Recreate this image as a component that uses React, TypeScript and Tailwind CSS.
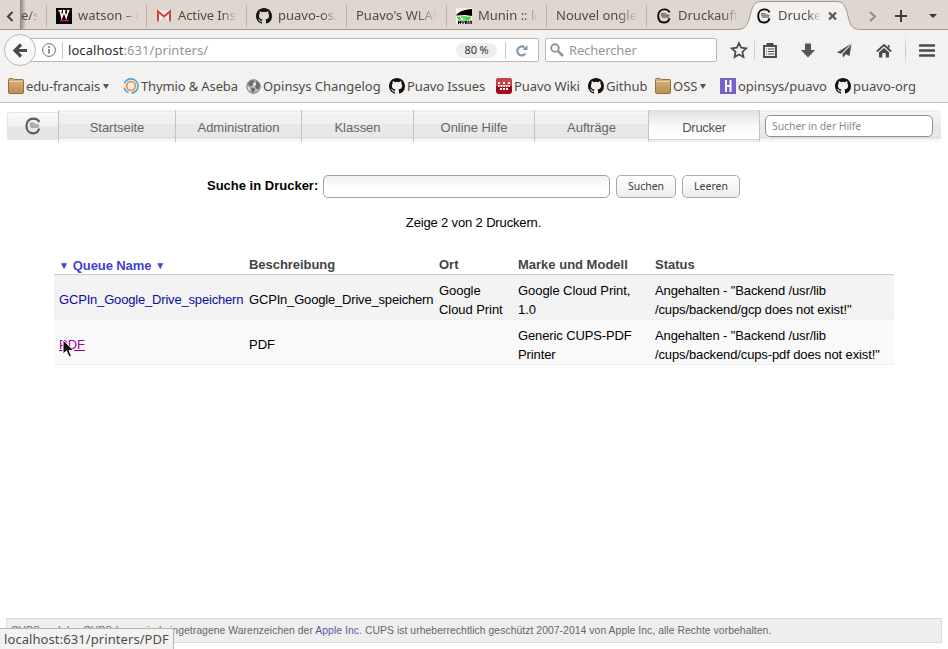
import React from 'react';

const ui = "font-['Noto_Sans',sans-serif]";
const web = "font-['Liberation_Sans',sans-serif]";

const GH = 'M8 0C3.58 0 0 3.58 0 8c0 3.54 2.29 6.53 5.47 7.59.4.07.55-.17.55-.38 0-.19-.01-.82-.01-1.49-2.01.37-2.53-.49-2.69-.94-.09-.23-.48-.94-.82-1.13-.28-.15-.68-.52-.01-.53.63-.01 1.08.58 1.23.82.72 1.21 1.87.87 2.33.66.07-.52.28-.87.51-1.07-1.78-.2-3.64-.89-3.64-3.95 0-.87.31-1.59.82-2.15-.08-.2-.36-1.02.08-2.12 0 0 .67-.21 2.2.82a7.6 7.6 0 0 1 4 0c1.53-1.04 2.2-.82 2.2-.82.44 1.1.16 1.92.08 2.12.51.56.82 1.27.82 2.15 0 3.07-1.87 3.75-3.65 3.95.29.25.54.73.54 1.48 0 1.07-.01 1.93-.01 2.2 0 .21.15.46.55.38A8.01 8.01 0 0 0 16 8c0-4.42-3.58-8-8-8z';

function Github() {
  return <svg className="size-4 shrink-0" viewBox="0 0 16 16"><path fill="#141414" d={GH} /></svg>;
}

function Cups({ color = '#0c0c0c', className = 'size-4' }: { color?: string; className?: string }) {
  return (
    <svg className={`${className} shrink-0`} viewBox="0 0 16 16" fill="none">
      <path d="M13.600 4.400C12.600 2.300 10.800 1.400 8.600 1.400 4.700 1.400 2.200 4 2.200 8s2.300 6.500 5.900 6.500c2.900 0 4.700-1.500 5.400-4.300" stroke={color} strokeWidth="1.900" />
      <path d="M5 5.500h4.500M5 7.300h8.500M6 9.100h7" stroke={color} strokeWidth="1.100" opacity=".55" />
      <path d="M5 6.400h7M5 8.200h8.500" stroke={color} strokeWidth=".8" opacity=".3" />
    </svg>
  );
}

function Folder() {
  return (
    <svg className="size-4 shrink-0" viewBox="0 0 16 16">
      <defs>
        <linearGradient id="folderFill" x1="0" y1="0" x2="0" y2="1"><stop offset="0" stopColor="#d9b27c" /><stop offset="1" stopColor="#b98f55" /></linearGradient>
      </defs>
      <path d="M.5 2V1.500q0-1 1-1h3.500l1 1h8.500q1 0 1 1v11.500q0 1.500-1.500 1.500H2q-1.500 0-1.500-1.500z" fill="url(#folderFill)" stroke="#94703c" />
      <path d="M1.500 3.500h13" stroke="#ecd3a8" />
    </svg>
  );
}

function Watson() {
  return (
    <svg className="size-4 shrink-0" viewBox="0 0 16 16">
      <path fill="#000" d="M0 0h16v16H0z" />
      <path d="M2.500 2.700h3.500M7 2.700h2.500M11 2.700h2.500M4.300 3l1.500 6.500L8 3.500l2.200 6L12.300 3" fill="none" stroke="#fff" strokeWidth="1.600" />
      <path fill="#e5127d" d="M4 11.700h9v1.500H4z" />
    </svg>
  );
}

function Gmail() {
  return (
    <svg className="size-4 shrink-0" viewBox="0 0 16 16">
      <path fill="#f3f1f0" d="M1 2.500h14v11H1z" />
      <path d="m3 13.500 5-5 5 5z" fill="#dbd7d4" />
      <path d="M2 13.500V3.500l6 5 6-5v10" fill="none" stroke="#d0483c" strokeWidth="2" />
    </svg>
  );
}

function Munin() {
  return (
    <svg className="size-4 shrink-0" viewBox="0 0 16 16">
      <path fill="#f4f4f4" d="M0 0h16v16H0z" />
      <path fill="#000" d="M0 7.500C3 3.500 8 1.500 16 1v7L9 7z" />
      <path d="M1 9.500h3M5 9h5M10 9.500h5M2 11h3M7 11h7" stroke="#2ad52f" strokeWidth="1.500" />
      <path d="M2.500 16v-3.200l1 2 1-2V16M6 12.500V15h2v-2.500M9.500 16v-3h1.300v3M12.200 12.500V16M14 16v-3h1.300v3" stroke="#000" fill="none" />
    </svg>
  );
}

function Thymio() {
  return (
    <svg className="size-4 shrink-0" viewBox="0 0 16 16" fill="none">
      <circle cx="8" cy="8" r="7.100" stroke="#42a9df" strokeWidth="1.600" strokeDasharray="29 3 7 4" transform="rotate(-150 8 8)" />
      <circle cx="8" cy="8" r="4.400" stroke="#f2953f" strokeWidth="1.900" />
    </svg>
  );
}

function Globe() {
  return (
    <svg className="size-[15px] shrink-0" viewBox="0 0 16 16">
      <circle cx="8" cy="8" r="7.300" fill="#b9b9b9" stroke="#7a7a7a" />
      <path fill="#6b6b6b" d="M2 5l2.500-3L8 1l1 2-2 1.500.5 2L5 8 3.500 7.500zM10 2l3 1.500L15 7l-1.500 4-2.500-.500L9.500 8 11 6zM5.500 9l4 1-.5 3-2 2-1.500-3z" />
      <path fill="#efefef" d="M1.500 8l2 1.500 1.500 3L2.500 11zM8 4.500l2-1L10.500 6 8 8z" />
    </svg>
  );
}

function Wiki() {
  return (
    <svg className="size-4 shrink-0" viewBox="0 0 16 16">
      <rect width="16" height="16" rx="3" fill="#9d0a20" />
      <path d="M3 0h10q3 0 3 3v5H0V3q0-3 3-3z" fill="#c8424e" />
      <path fill="#fff" d="M2 4h2v2H2zM7 4h2v2H7zM12 4h2v2h-2zM2 7h1.500v2H2zM4.500 7h2v2h-2zM7.300 7h1.500v2H7.300zM9.600 7h2v2h-2zM12.500 7H14v2h-1.500zM4 10h2v2H4zM7 10h2v2H7zM10 10h2v2h-2z" />
    </svg>
  );
}

function HIcon() {
  return (
    <svg className="size-4 shrink-0" viewBox="0 0 16 16">
      <path fill="#7762cc" d="M0 0h16v16H0z" />
      <path d="M6 2v12M10.500 2v12M6 8h4" stroke="#fff" strokeWidth="2" />
    </svg>
  );
}

function Tab({ icon, label, width }: { icon?: React.ReactNode; label: string; width: string }) {
  return (
    <div className="flex h-[29px] w-[100px] shrink-0 items-center pt-[3px]">
      <div className="h-[22px] w-px bg-[#b9b1a9]" />
      <div className="flex items-center gap-1.5 pl-[9px]">
        {icon}
        <span className={`${width} overflow-hidden whitespace-nowrap [mask-image:linear-gradient(to_right,black_75%,transparent)]`}>{label}</span>
      </div>
    </div>
  );
}

function Bookmark({ icon, label, className, menu }: { icon: React.ReactNode; label: string; className: string; menu?: boolean }) {
  return (
    <div className={`${className} flex shrink-0 items-center gap-[2px] whitespace-nowrap`}>
      {icon}
      <span className="pt-px">{label}</span>
      {menu && <svg className="ml-px mt-px h-[5px] w-[6px]" viewBox="0 0 6 5"><path d="M0 0h6L3 5z" fill="#57554f" /></svg>}
    </div>
  );
}

function Browser() {
  return (
    <header className={`${ui} text-[13px] text-[#4c4c4c]`}>
      <div className="relative flex h-[30px] border-b border-[#a1988f] bg-[#dfd6cf]">
        <div className="flex w-[46px] shrink-0 items-center">
          <svg className="ml-[6px] mt-[3px] h-[11px] w-2 shrink-0" viewBox="0 0 8 11"><path d="M6.500 1 2 5.500 6.500 10" fill="none" stroke="#3e3e3e" strokeWidth="2" /></svg>
          <div className="ml-[6px] h-[29px] w-[6px] shrink-0 bg-linear-to-r from-[#8b847d] to-[#dfd6cf]" />
          <span className="-ml-[5px] mt-[3px] w-[17px] overflow-hidden [mask-image:linear-gradient(to_right,black_50%,transparent)]">e/s</span>
        </div>
        <Tab icon={<Watson />} label="watson – r" width="w-[61px]" />
        <Tab icon={<Gmail />} label="Active Inst" width="w-[59px] tracking-[-0.1px]" />
        <Tab icon={<Github />} label="puavo-os/p" width="w-[59px]" />
        <Tab label="Puavo's WLAN" width="w-[81px]" />
        <Tab icon={<Munin />} label="Munin :: lo" width="w-[60px]" />
        <Tab label="Nouvel onglet" width="w-[82px]" />
        <Tab icon={<Cups />} label="Druckaufträge" width="w-[60px]" />
        <svg className="absolute left-[738px] top-0 h-[30px] w-[126px]" viewBox="0 0 126 30">
          <path d="M0 30v-.5C8 29 9 25 11.500 18 14.500 6 15.500 1.500 24 1.500h74c8 0 9.500 4.500 12.500 16.500 2 8 3.500 11 12 11.500V30z" fill="#f4f2f1" />
          <path d="M0 29.500C8 29 9 25 11.500 18 14.500 6 15.500 1.500 24 1.500h74c8 0 9.500 4.500 12.500 16.500 2 8 3.500 11 12 11.500" fill="none" stroke="#a1988f" />
        </svg>
        <div className="relative flex w-[202px] items-center pt-[3px]">
          <div className="ml-[10px]"><Cups /></div>
          <span className="ml-[6px] w-[43px] overflow-hidden whitespace-nowrap [mask-image:linear-gradient(to_right,black_70%,transparent)]">Drucker</span>
          <svg className="ml-[7px] h-[8px] w-[9px] shrink-0" viewBox="0 0 9 8"><path d="m1 .5 7 7M8 .5l-7 7" stroke="#5c5b59" strokeWidth="2.300" /></svg>
          <svg className="ml-[32px] h-[11px] w-2 shrink-0" viewBox="0 0 8 11"><path d="m1 1 5 4.500L1 10" fill="none" stroke="#938c86" strokeWidth="2" /></svg>
          <svg className="ml-[18px] size-3 shrink-0" viewBox="0 0 12 12"><path d="M6 0v12M0 6h12" stroke="#3e3e3e" strokeWidth="2" /></svg>
          <svg className="ml-[22px] h-1 w-2 shrink-0" viewBox="0 0 8 4"><path d="M0 0h8L4 4z" fill="#30343b" /></svg>
        </div>
      </div>

      <div className="flex h-10 items-center bg-[#f4f2f1]">
        <div className="z-10 ml-1 flex size-8 shrink-0 items-center justify-center rounded-full border border-[#bcb8b4] bg-[#faf9f9]">
          <svg className="size-[15px]" viewBox="0 0 15 15"><path d="M8 1.500 2 7.500l6 6M2.500 7.500H14" fill="none" stroke="#4b4b4b" strokeWidth="3.200" /></svg>
        </div>
        <div className="-ml-3 flex h-6 w-[515px] shrink-0 items-center rounded-[2px] border border-[#bcb8b4] bg-white pl-[17px]">
          <svg className="size-[14px] shrink-0" viewBox="0 0 14 14"><circle cx="7" cy="7" r="6.400" fill="none" stroke="#6a6a6a" /><path d="M7 6v4.500M7 3.300v1.600" stroke="#6a6a6a" strokeWidth="1.500" /></svg>
          <div className="ml-[6px] h-[17px] w-px bg-[#c8c8c8]" />
          <span className="ml-[5px] w-[388px] pt-[2px] tracking-[0.06px] text-[#2e2e2e]">localhost<span className="text-[#969696]">:631/printers/</span></span>
          <span className="flex h-[15px] w-[41px] items-center justify-center whitespace-nowrap rounded-full bg-[#eeeeee] text-[11px] tracking-[-0.2px] text-[#333]">80 %</span>
          <div className="ml-[8px] h-[17px] w-px bg-[#c8c8c8]" />
          <svg className="ml-[10px] h-[13px] w-[12px]" viewBox="0 0 12 13"><path d="M9.500 9.500A4.500 4.500 0 1 1 8.500 3.300" fill="none" stroke="#8795a4" strokeWidth="2.100" /><path d="M11.500 1v5h-5z" fill="#8795a4" /></svg>
        </div>
        <div className="ml-[6px] flex h-6 w-[172px] shrink-0 items-center rounded-[2px] border border-[#bcb8b4] bg-white pl-1">
          <svg className="size-[14px]" viewBox="0 0 14 14"><circle cx="5" cy="5" r="3.800" fill="none" stroke="#929292" strokeWidth="1.900" /><path d="m8 8 5 5" stroke="#929292" strokeWidth="2.500" /></svg>
          <span className="ml-[5px] pt-[2px] tracking-[-0.15px] text-[#969696]">Rechercher</span>
        </div>
        <svg className="ml-[13px] size-[18px] shrink-0" viewBox="0 0 18 18"><path d="m9 2 2.100 4.700 5.200.6-3.900 3.500 1.100 5.200L9 13.400 4.500 16l1.100-5.200-3.900-3.500 5.200-.6z" fill="none" stroke="#4b4b4b" strokeWidth="1.700" /></svg>
        <div className="ml-[6px] h-[18px] w-px bg-[#d0ccca]" />
        <svg className="ml-[8px] h-[15px] w-[14px] shrink-0" viewBox="0 0 14 15"><path d="M1 3h12v11H1zM4.500 3V1h5v2" fill="none" stroke="#4b4b4b" strokeWidth="1.900" /><path d="M3 6h1M5 6h6.500M3 8.500h1M5 8.500h6.500M3 11h1M5 11h6.500" stroke="#4b4b4b" strokeWidth="1.200" /></svg>
        <svg className="ml-6 h-[15px] w-[14px] shrink-0" viewBox="0 0 14 15"><path d="M4 .5h6V7h4l-7 7.500L0 7h4z" fill="#555" /></svg>
        <svg className="ml-[22px] size-[15px] shrink-0" viewBox="0 0 15 15"><path d="M14.500.5 0 9.500l4 1.300zM14 2 5.500 11l.5 3.500 2-2.200zM14.500 1 8.500 11l4 2z" fill="#4b4b4b" /></svg>
        <svg className="ml-6 h-[15px] w-4 shrink-0" viewBox="0 0 16 15"><path d="M.8 8.500 8 2l7.200 6.500" fill="none" stroke="#4b4b4b" strokeWidth="1.800" /><path d="m8 5 5 4.300v5.200H9.700V10H6.300v4.500H3V9.300zM11.800 2h1.700v3.500l-1.700-1.500z" fill="#4b4b4b" /></svg>
        <div className="ml-[13px] h-[33px] w-px bg-linear-to-b from-[#f4f2f1] via-[#c5c1bd] to-[#f4f2f1]" />
        <svg className="ml-[13px] h-[13px] w-4 shrink-0" viewBox="0 0 16 13"><path d="M1 1.500h14M1 6.500h14M1 11.500h14" stroke="#4b4b4b" strokeWidth="2.600" strokeLinecap="round" /></svg>
      </div>

      <div className="flex h-[33px] items-center border-b border-[#c5c0bc] bg-[#f4f2f1] pl-2">
        <Bookmark icon={<Folder />} label="edu-francais" menu className="w-[115px] tracking-[-0.13px]" />
        <Bookmark icon={<Thymio />} label="Thymio & Aseba" className="w-[123px] tracking-[-0.13px]" />
        <Bookmark icon={<Globe />} label="Opinsys Changelog" className="w-[143px] tracking-[-0.03px]" />
        <Bookmark icon={<Github />} label="Puavo Issues" className="w-[107px] tracking-[-0.12px]" />
        <Bookmark icon={<Wiki />} label="Puavo Wiki" className="w-[92px] tracking-[-0.1px]" />
        <Bookmark icon={<Github />} label="Github" className="w-[67px]" />
        <Bookmark icon={<Folder />} label="OSS" menu className="w-[65px]" />
        <Bookmark icon={<HIcon />} label="opinsys/puavo" className="w-[115px]" />
        <Bookmark icon={<Github />} label="puavo-org" className="w-[90px]" />
      </div>
    </header>
  );
}

const navBg = 'bg-[linear-gradient(to_bottom,#eeeeee_0px,#eeeeee_2px,#fafafa_2px,#f1f1f1_4px,#efefef_14px,#e8e8e8_14px,#e8e8e8_27px,#dedede_27px,#dedede_28px,#f4f4f4_29px,#fbfbfb_32px)]';

function NavItem({ label, width }: { label: string; width: string }) {
  return <div className={`${width} ${navBg} flex h-8 shrink-0 items-center justify-center border-l border-[#c4c4c4] pt-[3px]`}>{label}</div>;
}

function Nav() {
  return (
    <nav className="flex h-8 pl-[7px] text-[13px] tracking-[-0.03px] text-[#666]">
      <div className="mt-[2px] flex h-7 w-[51px] shrink-0 items-center justify-center rounded-l-[3px] border border-r-0 border-[#e4e4e4] bg-[linear-gradient(to_bottom,#fafafa,#f0f0f0_50%,#e8e8e8_50%,#e4e4e4)]">
        <Cups color="#5b5b5b" className="size-[18px]" />
      </div>
      <NavItem label="Startseite" width="w-[117px]" />
      <NavItem label="Administration" width="w-[126px]" />
      <NavItem label="Klassen" width="w-[112px]" />
      <NavItem label="Online Hilfe" width="w-[121px]" />
      <NavItem label="Aufträge" width="w-[114px]" />
      <div className="flex h-8 w-[112px] shrink-0 items-center justify-center border-x border-[#c4c4c4] bg-[linear-gradient(to_bottom,#dddddd_0px,#ececec_7px,#fafafa_17px,#fff_29px,#d5d5d5_29px,#d5d5d5_30px,#eee_30px)] pt-[3px] tracking-[-0.3px] text-[#555]">Drucker</div>
      <div className={`${navBg} flex h-8 w-[181px] shrink-0 rounded-r pl-[5px] pt-[5px]`}>
        <div className={`${ui} flex h-[22px] w-[168px] items-center rounded-[5px] border border-[#919191] bg-white pl-[6px] pt-px text-[10.500px] tracking-[-0.1px] text-[#8b8b8b]`}>Sucher in der Hilfe</div>
      </div>
    </nav>
  );
}

function Button({ label, className }: { label: string; className: string }) {
  return <button className={`${ui} ${className} h-[23px] rounded-[5px] border border-[#aaa] bg-linear-to-b from-white to-[#eeeceb] text-[10.500px] text-[#3c3c3c]`}>{label}</button>;
}

const cols = 'grid grid-cols-[190px_190px_79px_137px_244px]';

function Printers() {
  return (
    <main>
      <div className="mt-[33px] flex h-[23px] items-center pl-[207px]">
        <label className="w-[116px] whitespace-nowrap pb-[2px] text-[13px] font-bold">Suche in Drucker:</label>
        <div className="h-[23px] w-[287px] rounded-[5px] border border-[#a2a2a2] bg-linear-to-b from-[#f1f1f1] to-white to-60%" />
        <Button label="Suchen" className="ml-[6px] w-[60px]" />
        <Button label="Leeren" className="ml-[6px] w-[58px]" />
      </div>
      <p className="mt-[15px] pr-px text-center text-[13px] leading-[19px] tracking-[-0.15px]">Zeige 2 von 2 Druckern.</p>
      <section className="ml-[54px] mt-[23px] w-[840px] text-[13px] leading-[19px]">
        <div className={`${cols} h-5 border-b border-[#ccc] pl-[5px] font-bold text-[#444]`}>
          <div className="flex items-center tracking-[-0.1px] text-[#4343cf]"><span className="mr-1 pt-px text-[10px]">▼</span>Queue Name<span className="ml-1 pt-px text-[10px]">▼</span></div>
          <div className="tracking-[-0.05px]">Beschreibung</div><div>Ort</div><div>Marke und Modell</div><div>Status</div>
        </div>
        <div className={`${cols} h-[45px] items-center border-b border-[#eee] bg-[#f3f3f3] pl-[5px] pt-[6px]`}>
          <a className="pb-[2px] tracking-[-0.18px] text-[#0c0ca0]">GCPIn_Google_Drive_speichern</a>
          <div className="pb-[2px] tracking-[-0.18px]">GCPIn_Google_Drive_speichern</div>
          <div className="tracking-[-0.06px]">Google<br />Cloud Print</div>
          <div className="tracking-[-0.06px]">Google Cloud Print,<br />1.0</div>
          <div className="tracking-[-0.12px]">Angehalten - "Backend /usr/lib<br />/cups/backend/gcp does not exist!"</div>
        </div>
        <div className={`${cols} h-[45px] items-center border-b border-[#eee] bg-[#f9f9f9] pl-[5px] pt-[6px]`}>
          <a className="relative pb-[2px] text-[#a6009e]"><span className="underline">PDF</span>
            <svg className="absolute left-[3px] top-[4px] h-[20px] w-[13px]" viewBox="0 0 13 20"><path d="M1 1v14l3.500-3 2.500 6 2.500-1-2.500-5.500H12z" fill="#111" stroke="#fff" /></svg>
          </a>
          <div className="pb-[2px]">PDF</div><div />
          <div className="tracking-[-0.12px]">Generic CUPS-PDF<br />Printer</div>
          <div className="tracking-[-0.12px]">Angehalten - "Backend /usr/lib<br />/cups/backend/cups-pdf does not exist!"</div>
        </div>
      </section>
    </main>
  );
}

export default function App() {
  return (
    <div className={`relative flex h-[649px] w-[948px] flex-col overflow-hidden bg-white text-black ${web}`}>
      <Browser />
      <div className="h-[7px]" />
      <Nav />
      <Printers />
      <footer className="mb-[6px] ml-[6px] mt-auto flex h-[25px] w-[936px] items-center whitespace-nowrap border border-[#dadada] bg-[#eeeeee] pl-[4px] pt-px text-[10.400px] tracking-[0.045px] text-[#666]">
        <span>CUPS und das CUPS-Logo sind eingetragene Warenzeichen der <a className="text-[#5c5c9c]">Apple Inc.</a> CUPS ist urheberrechtlich geschützt 2007-2014 von Apple Inc, alle Rechte vorbehalten.</span>
      </footer>
      <div className={`${ui} absolute bottom-0 left-0 flex h-[21px] w-[174px] items-center whitespace-nowrap rounded-tr-[2px] border-r border-t border-[#b8b4b1] bg-[#f4f2f1] pl-1 pt-[2px] text-[13px] tracking-[0.08px] text-[#4c4c4c]`}>localhost:631/printers/PDF</div>
    </div>
  );
}
